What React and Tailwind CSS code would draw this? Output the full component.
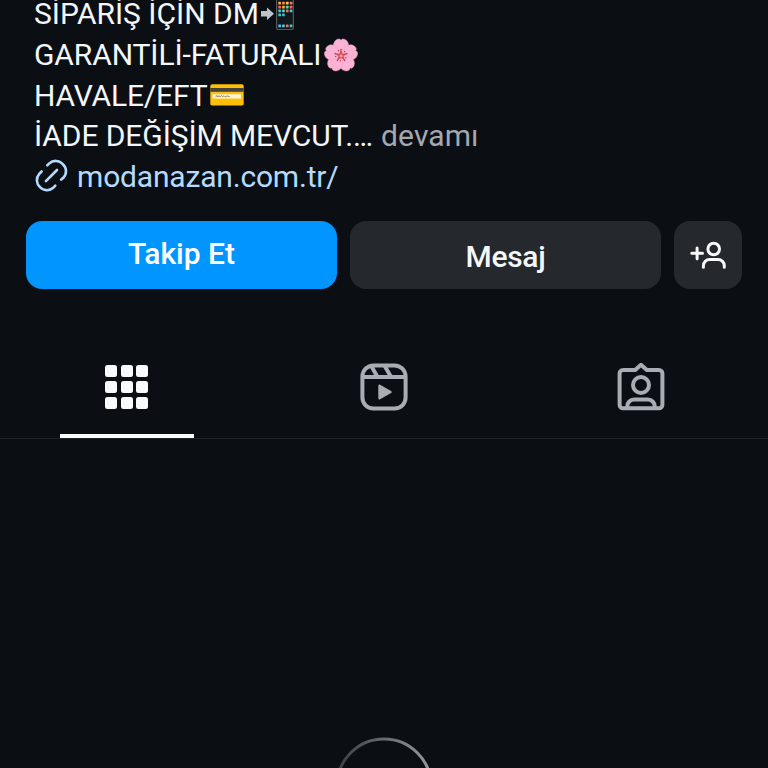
import React, { useState } from "react";

// app icons on the phone screen: [x, y, color]
const phoneApps = [
    [18.3, 1.8, "#ffab3d"], [22.1, 1.8, "#ff8748"], [25.9, 1.8, "#ffc04a"], [29.7, 1.8, "#f7736a"],
    [18.3, 5.7, "#f26a50"], [22.1, 5.7, "#f3b04a"], [25.9, 5.7, "#58d3b4"], [29.7, 5.7, "#f26b60"],
    [18.3, 9.6, "#4abbd8"], [22.1, 9.6, "#52d8c0"], [25.9, 9.6, "#f0705e"], [29.7, 9.6, "#58cbb6"],
    [18.3, 13.5, "#3ccb9e"], [22.1, 13.5, "#48b6d2"],
    [18.3, 24.5, "#48c6e8"], [22.1, 24.5, "#52cfd9"], [25.9, 24.5, "#f06b5f"], [29.7, 24.5, "#4cc7b0"],
];

const PhoneEmoji = () => (
    <svg width="34" height="31" viewBox="0 0 34 31" className="shrink-0">
        <path d="M1 11h6V7.5l7 6.2-7 6.3v-3.5H1z" fill="#bcc4ca" />
        <rect x="16" y="-3" width="18" height="33" rx="2" fill="#52575a" />
        <rect x="17.2" y="-2" width="15.6" height="31" rx="1.2" fill="#10181d" />
        {phoneApps.map(([x, y, color]) => (
            <rect key={`${x}-${y}`} x={x} y={y} width="2.7" height="2.7" rx=".5" fill={color} />
        ))}
    </svg>
);

const petals = [0, 72, 144, 216, 288];

const BlossomEmoji = () => (
    <svg width="34" height="34" viewBox="0 0 34 34" className="shrink-0">
        {petals.map((deg) => (
            <path
                key={deg}
                transform={`rotate(${deg} 17 17.5)`}
                d="M17 17.5C10.5 14 8.6 9 9.8 5C10.8 2 14 .4 15.8 1L17 2.2L18.2 1C20 .4 23.2 2 24.2 5C25.4 9 23.5 14 17 17.5z"
                fill="#fbb3d3"
                stroke="#f39cc2"
                strokeWidth=".4"
            />
        ))}
        <path d="M17 11.5l1.6 4 4.400-.1-3.400 2.800 1.400 4.300-4-2.400-4 2.400 1.400-4.300-3.400-2.800 4.400.1z" fill="#dd5470" />
        {petals.map((deg) => (
            <g key={deg} transform={`rotate(${deg} 17 17.5)`} stroke="#c93f5f" strokeWidth=".7">
                <path d="M17 17.5V12" />
                <circle cx="17" cy="11.5" r=".8" fill="#c2334f" stroke="none" />
                <circle cx="14.4" cy="12.8" r=".7" fill="#c2334f" stroke="none" />
            </g>
        ))}
        <circle cx="17" cy="17.7" r="1.5" fill="#f6aa72" />
    </svg>
);

const CardEmoji = () => (
    <svg width="34" height="22" viewBox="0 0 34 22" className="shrink-0">
        <rect x=".3" y=".3" width="33.4" height="21.2" rx="1.8" fill="#fdbf0a" />
        <rect x=".3" y="4" width="33.4" height="3.8" fill="#46413a" />
        <rect x="2.5" y="10.2" width="28.5" height="4.3" fill="#fff6d8" />
        <path d="M5.5 12.9l1.5-1.4.7 1.4 1.5-1.2.8 1.2 1.3-1.4 1.2 1.2 1.6-.9 1.1 1.1 1.8-1 2.8.8" fill="none" stroke="#7c6540" strokeWidth=".8" />
    </svg>
);

const LinkIcon = () => (
    <svg width="34" height="34" viewBox="0 0 34 34" fill="none" stroke="#b4dbff" strokeWidth="2.6" strokeLinecap="round" className="-mt-px ml-px shrink-0">
        <path d="M10.9 22.1L22 11" />
        <path d="M12.3 6.3l2-1.9A9.4 9.4 0 0 1 27.8 5.2A9.4 9.4 0 0 1 28.6 18.5l-2.4 2.1" />
        <path d="M6.6 12.5L4.3 14.8A9.4 9.4 0 0 0 4.9 28A9.4 9.4 0 0 0 18.2 28.8l2.1-2.1" />
    </svg>
);

const AddUserIcon = () => (
    <svg width="36" height="30" viewBox="0 0 36 30" fill="none" stroke="#f6f8fa" strokeWidth="3" strokeLinecap="round">
        <path d="M1.8 13.3h10.7M7.1 8v10.7" />
        <circle cx="23.7" cy="9" r="5.8" />
        <path d="M13.4 27.3v-1.6a6.2 6.2 0 0 1 6.2-6.2h8.5a6.2 6.2 0 0 1 6.2 6.2v1.6" />
    </svg>
);

const GridIcon = () => (
    <div className="grid grid-cols-3 gap-[3.6px]">
        {Array.from({ length: 9 }).map((_, i) => (
            <div key={i} className="h-3 w-3 rounded-[2.5px] bg-[#f8fafb]"></div>
        ))}
    </div>
);

const ReelsIcon = () => (
    <svg width="48" height="48" viewBox="0 0 48 48" fill="none" stroke="#a8adb4" strokeWidth="4">
        <rect x="2.4" y="2.4" width="43.2" height="43.2" rx="11" />
        <path d="M2.5 14h43M11.7 3.8l5.7 10M24.6 2.8l6.3 11" />
        <path d="M19.5 22.7v12.6l11-6.3z" fill="#a8adb4" strokeWidth="2.4" strokeLinejoin="round" />
    </svg>
);

const TaggedIcon = () => (
    <svg width="48" height="48" viewBox="0 0 48 48" fill="none" stroke="#a8adb4" strokeWidth="4" strokeLinejoin="round">
        <path d="M18.2 7H6.1a3.5 3.5 0 0 0-3.5 3.5v31.3a3.5 3.5 0 0 0 3.5 3.5h35.8a3.5 3.5 0 0 0 3.5-3.5V10.5a3.5 3.5 0 0 0-3.5-3.5H29.8L24 1.8z" />
        <circle cx="24" cy="22" r="8" />
        <path d="M10.3 44.5v-1.2a6.8 6.8 0 0 1 6.8-6.8h13.8a6.8 6.8 0 0 1 6.8 6.8v1.2" />
    </svg>
);

const tabs = [
    { id: "posts", Icon: GridIcon },
    { id: "reels", Icon: ReelsIcon },
    { id: "tagged", Icon: TaggedIcon },
];

const App = () => {
    const [activeTab, setActiveTab] = useState("posts");

    return (
        <div className="flex h-[768px] w-[768px] flex-col overflow-hidden bg-[#0b0f14] font-[Roboto,sans-serif] text-[#f4f7fa]">
            {/* BIO */}
            <div className="h-[221px] shrink-0 pl-[34px] text-[30px] leading-[34px] whitespace-nowrap">
                <div className="flex h-[34.6px] items-start">
                    <span className="-mt-[3px] w-[226px]">SİPARİŞ İÇİN DM</span>
                    <PhoneEmoji />
                </div>
                <div className="flex h-[40.6px] items-center">
                    <span className="w-[290px] tracking-[-0.1px]">GARANTİLİ-FATURALI</span>
                    <BlossomEmoji />
                </div>
                <div className="flex h-[40.6px] items-center">
                    <span className="w-[175.5px] pt-px tracking-[-0.15px]">HAVALE/EFT</span>
                    <CardEmoji />
                </div>
                <div className="flex h-[40.6px] items-center pb-px">
                    <span className="tracking-[-0.09px]">İADE DEĞİŞİM MEVCUT.…</span>
                    <button className="ml-2 tracking-[0.1px] text-[#a4a9b1]">devamı</button>
                </div>
                <div className="flex h-[40.6px] items-center gap-[8px] text-[#b4dbff]">
                    <LinkIcon />
                    <a href="#" className="tracking-[-0.18px]">modanazan.com.tr/</a>
                </div>
            </div>

            {/* ACTION BUTTONS */}
            <div className="flex h-[68px] shrink-0 gap-[13px] px-[26px] text-[30px] font-medium">
                <button className="flex-1 rounded-[16px] bg-[#0095ff] pb-[3px] text-white">Takip Et</button>
                <button className="flex-1 rounded-[16px] bg-[#25282d] pt-[2px] tracking-[-0.3px]">Mesaj</button>
                <button className="flex w-[68px] items-center justify-center rounded-[16px] bg-[#25282d]">
                    <AddUserIcon />
                </button>
            </div>

            {/* TABS */}
            <div className="-mx-[2px] mt-[47px] flex h-[103px] shrink-0 border-b border-[#20252a]">
                {tabs.map(({ id, Icon }) => (
                    <button
                        key={id}
                        onClick={() => setActiveTab(id)}
                        className="flex flex-1 flex-col items-center"
                    >
                        <div className="flex h-[98px] items-center justify-center pt-[4px]">
                            <Icon />
                        </div>
                        <div className={`h-[4px] w-[134px] ${activeTab === id ? "bg-[#f8fafb]" : ""}`}></div>
                    </button>
                ))}
            </div>

            {/* LOADING SPINNER */}
            <div className="mt-[298px] flex shrink-0 justify-center">
                <svg width="98" height="98" viewBox="0 0 98 98" fill="none">
                    <defs>
                        <linearGradient id="spinner" x1="0" y1="0" x2="1" y2="0">
                            <stop offset="0" stopColor="#3a3e43" />
                            <stop offset="1" stopColor="#969a9e" />
                        </linearGradient>
                    </defs>
                    <circle cx="49" cy="49" r="47" stroke="url(#spinner)" strokeWidth="3" />
                </svg>
            </div>
        </div>
    );
};

export default App;
